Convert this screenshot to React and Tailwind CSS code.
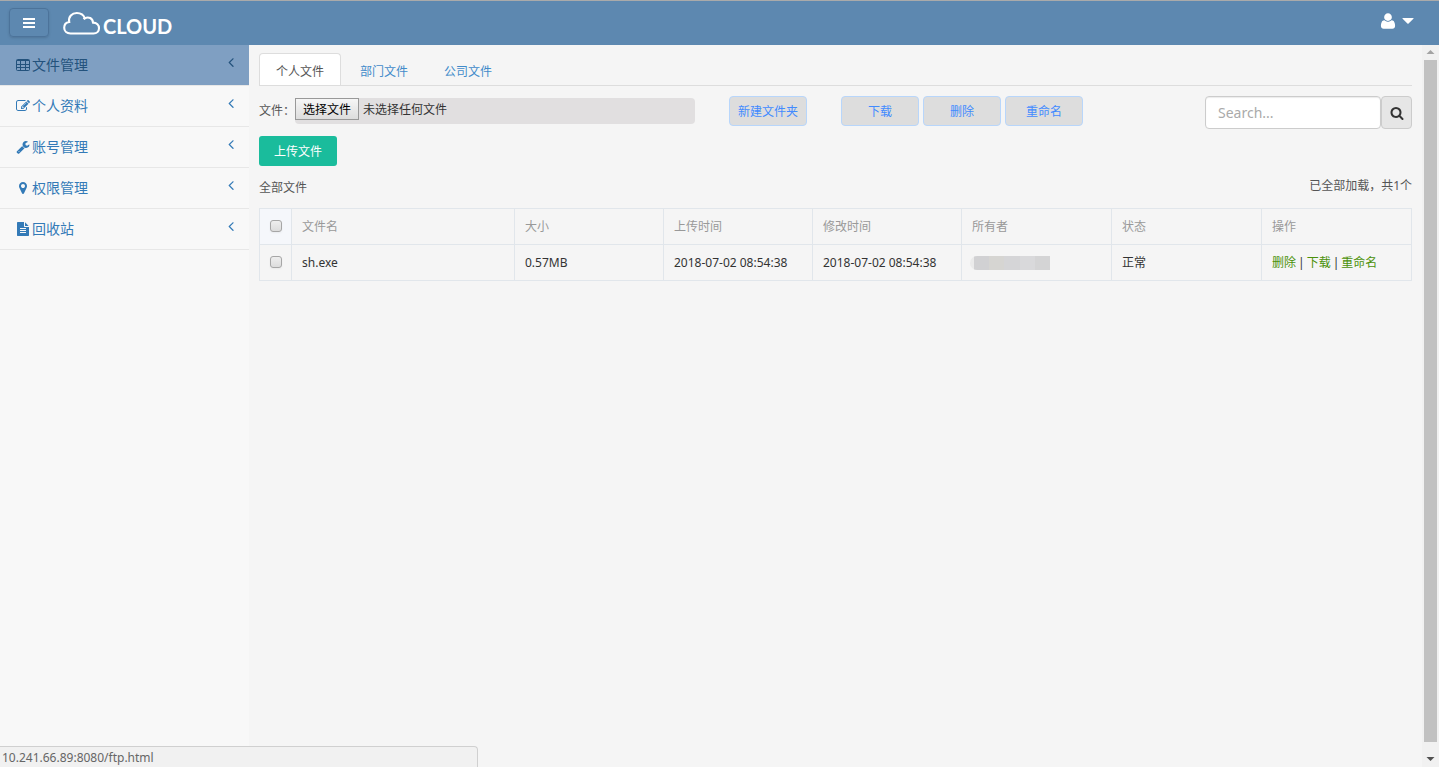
import React, { useState } from 'react';

const ICONS = {
  edit: 'M888 1184l116-116-152-152-116 116v56h96v96h56zm440-720q-16-16-33 1l-350 350q-17 17-1 33t33-1l350-350q17-17 1-33zm80 594v190q0 119-84.5 203.5t-203.5 84.5h-832q-119 0-203.5-84.5t-84.5-203.5v-832q0-119 84.5-203.5t203.5-84.5h832q63 0 117 25 15 7 18 23 3 17-9 29l-49 49q-14 14-32 8-23-6-45-6h-832q-66 0-113 47t-47 113v832q0 66 47 113t113 47h832q66 0 113-47t47-113v-126q0-13 9-22l64-64q15-15 35-7t20 29zm-96-738l288 288-672 672h-288v-288zm444 132l-92 92-288-288 92-92q28-28 68-28t68 28l152 152q28 28 28 68t-28 68z',
  wrench: 'M448 1472q0-26-19-45t-45-19-45 19-19 45 19 45 45 19 45-19 19-45zm644-420l-682 682q-37 37-90 37-52 0-91-37l-106-108q-38-36-38-90 0-53 38-91l681-681q39 98 114.500 173.500t173.500 114.500zm634-435q0 39-23 106-47 134-164.500 217.500t-258.500 83.500q-185 0-316.500-131.500t-131.500-316.500 131.500-316.500 316.500-131.500q58 0 121.500 16.500t107.500 46.500q16 11 16 28t-16 28l-293 169v224l193 107q5-3 79-48.500t135.500-81 70.500-35.500q15 0 23.500 10t8.500 25z',
  marker: 'M1152 640q0-106-75-181t-181-75-181 75-75 181 75 181 181 75 181-75 75-181zm256 0q0 109-33 179l-364 774q-16 33-47.500 52t-67.500 19-67.500-19-46.500-52l-365-774q-33-70-33-179 0-212 150-362t362-150 362 150 150 362z',
  file: 'M1596 476q14 14 28 36h-472v-472q22 14 36 28zm-476 164h544v1056q0 40-28 68t-68 28h-1344q-40 0-68-28t-28-68v-1600q0-40 28-68t68-28h800v544q0 40 28 68t68 28zm160 736v-64q0-14-9-23t-23-9h-704q-14 0-23 9t-9 23v64q0 14 9 23t23 9h704q14 0 23-9t9-23zm0-256v-64q0-14-9-23t-23-9h-704q-14 0-23 9t-9 23v64q0 14 9 23t23 9h704q14 0 23-9t9-23zm0-256v-64q0-14-9-23t-23-9h-704q-14 0-23 9t-9 23v64q0 14 9 23t23 9h704q14 0 23-9t9-23z',
  angle: 'M1203 544q0 13-10 23l-393 393 393 393q10 10 10 23t-10 23l-50 50q-10 10-23 10t-23-10l-466-466q-10-10-10-23t10-23l466-466q10-10 23-10t23 10l50 50q10 10 10 23z',
  search: 'M1216 832q0-185-131.500-316.500t-316.500-131.500-316.500 131.500-131.500 316.500 131.500 316.500 316.500 131.500 316.500-131.500 131.500-316.500zm512 832q0 52-38 90t-90 38q-54 0-90-38l-343-342q-179 124-399 124-143 0-273.500-55.500t-225-150-150-225-55.500-273.500 55.500-273.500 150-225 225-150 273.500-55.500 273.500 55.500 225 150 150 225 55.500 273.500q0 220-124 399l343 343q37 37 37 90z',
  user: 'M1600 1405q0 120-73 189.500t-194 69.500h-874q-121 0-194-69.500t-73-189.500q0-53 3.500-103.500t14-109 26.500-108.500 43-97.500 62-81 85.500-53.500 111.500-20q9 0 42 21.500t74.500 48 108 48 133.500 21.500 133.500-21.500 108-48 74.500-48 42-21.500q61 0 111.500 20t85.500 53.500 62 81 43 97.500 26.500 108.500 14 109 3.500 103.500zm-320-893q0 159-112.500 271.500t-271.500 112.500-271.500-112.500-112.500-271.500 112.500-271.500 271.500-112.500 271.500 112.500 112.500 271.500z',
};

const Icon = ({ name, className }) => (
  <svg viewBox="0 0 1792 1792" fill="currentColor" className={className} aria-hidden="true">
    <path d={ICONS[name]} />
  </svg>
);

// thin grid, drawn on whole pixels so the lines stay crisp
const TableIcon = ({ className }) => (
  <svg viewBox="0 0 14 14" fill="none" stroke="currentColor" className={className} aria-hidden="true">
    <rect x="0.5" y="1.5" width="13" height="11" rx="1" />
    <path d="M1 2.500h12M1 6.500h12M1 9.500h12M4.500 2v10M9.500 2v10" />
  </svg>
);

const menu = [
  { icon: 'table', label: '文件管理' },
  { icon: 'edit', label: '个人资料' },
  { icon: 'wrench', label: '账号管理' },
  { icon: 'marker', label: '权限管理' },
  { icon: 'file', label: '回收站' },
];

const tabs = ['个人文件', '部门文件', '公司文件'];

const columns = [
  { name: '文件名', width: 'w-[223px]' },
  { name: '大小', width: 'w-[149px]' },
  { name: '上传时间', width: 'w-[149px]' },
  { name: '修改时间', width: 'w-[149px]' },
  { name: '所有者', width: '' },
  { name: '状态', width: '' },
  { name: '操作', width: '' },
];

const files = [
  { name: 'sh.exe', size: '0.57MB', uploaded: '2018-07-02 08:54:38', modified: '2018-07-02 08:54:38', status: '正常' },
];

const Header = () => (
  <header className="flex h-[45px] items-start justify-between border-t border-[#aaaaaa] bg-[#5d88b0] pl-[9px] pr-[25px] text-white">
    <div className="flex">
      <button aria-label="菜单" className="mt-[7px] flex h-[29px] w-10 items-center justify-center rounded border border-[#4c739a] shadow-sm">
        <svg viewBox="0 0 12 10" className="h-[10px] w-3" fill="currentColor">
          <path d="M0 0h12v2H0zM0 4h12v2H0zM0 8h12v2H0z" />
        </svg>
      </button>
      <a href="#" className="ml-[14px] mt-[10px] flex h-7">
        <svg viewBox="0 0 38 24" className="h-6 w-[38px]" fill="none" stroke="currentColor" strokeWidth="2.1">
          <path d="M7.500 22.500C3.500 22.500 1.200 19.900 1.200 16.800C1.200 13.700 3.300 11.400 6.200 11C5.200 5.500 9 2 13.800 2C17.800 2 20.800 4.200 21.800 7.300C25.500 5.200 29.800 7.300 30 11.600C33.800 11.700 36 14.200 36 17.200C36 20.300 33.800 22.500 30.500 22.500Z" />
          <path d="M22 7.200C21.500 7.400 21 7.800 20.700 8.300" />
        </svg>
        <span className="ml-0.5 pt-[3px] font-[Lato] text-xl leading-6 font-bold">CLOUD</span>
      </a>
    </div>
    <button aria-label="用户" className="mt-[11px] flex items-center gap-[5px]">
      <Icon name="user" className="h-[18px] w-[18px]" />
      <svg viewBox="0 0 12 6" className="h-[6px] w-3" fill="currentColor">
        <path d="M1 0h10q1 0 .4.800L6.600 5.600q-.6.500-1.200 0L.6.800Q0 0 1 0z" />
      </svg>
    </button>
  </header>
);

const Sidebar = () => (
  <nav className="w-[249px] shrink-0 bg-[#f8f8f8]">
    {menu.map((item, index) => (
      <a
        key={item.label}
        href="#"
        className={`flex h-[41px] items-center border-b border-[#e7e7e7] pl-4 pr-[10px] text-sm leading-5 ${
          index === 0 ? 'bg-[#7f9fc2] text-[#23527c]' : 'text-[#337ab7]'
        }`}
      >
        {item.icon === 'table' ? (
          <TableIcon className="mr-0.5 h-[14px] w-[14px]" />
        ) : (
          <Icon name={item.icon} className="mr-0.5 h-[14px] w-[14px]" />
        )}
        <span>{item.label}</span>
        <Icon name="angle" className="mb-[6px] ml-auto h-4 w-4" />
      </a>
    ))}
  </nav>
);

const ToolButton = ({ children }) => (
  <button className="h-[30px] w-[78px] rounded border border-[#b8d6fb] bg-[#dddddd] pt-0.5 text-[#428bff]">{children}</button>
);

const Toolbar = () => (
  <div className="mt-[10px] flex items-start">
    <div className="flex items-start pt-0.5">
      <label htmlFor="upload" className="w-9 shrink-0 pt-[3px] leading-5 whitespace-nowrap">文件：</label>
      <label className="flex h-[26px] w-[400px] items-start rounded bg-[#e1dfe0] text-[#333333]">
        <input id="upload" type="file" className="sr-only" />
        <span className="h-[22px] w-16 border border-[#999999] bg-linear-to-b from-[#f6f6f6] to-[#dddddd] text-center leading-[22px] text-black">选择文件</span>
        <span className="ml-1 leading-6">未选择任何文件</span>
      </label>
    </div>
    <div className="ml-[34px] flex gap-[34px]">
      <ToolButton>新建文件夹</ToolButton>
      <div className="flex gap-1">
        <ToolButton>下载</ToolButton>
        <ToolButton>删除</ToolButton>
        <ToolButton>重命名</ToolButton>
      </div>
    </div>
    <form className="ml-auto flex" onSubmit={(e) => e.preventDefault()}>
      <input
        type="text"
        aria-label="Search"
        placeholder="Search..."
        className="h-[33px] w-44 rounded border border-[#cccccc] bg-white px-3 text-sm shadow-[inset_0_1px_1px_rgba(0,0,0,0.08)] placeholder:text-[#aaaaaa]"
      />
      <button aria-label="搜索" className="flex h-[33px] w-[31px] items-center justify-center rounded border border-[#cccccc] bg-[#e6e6e6] text-[#333333]">
        <Icon name="search" className="h-[14px] w-[14px]" />
      </button>
    </form>
  </div>
);

const Checkbox = ({ label }) => (
  <input
    type="checkbox"
    aria-label={label}
    className="mb-0.5 block h-3 w-3 appearance-none rounded-[3px] border border-[#a6a6a6] bg-linear-to-b from-[#eeeeee] to-[#dcdcdc] shadow-xs checked:bg-[#428bff]"
  />
);

// owner name is masked out
const MaskedOwner = () => (
  <div className="-ml-0.5 flex h-[14px] w-20 overflow-hidden rounded-l-full bg-[#ebebeb] pl-1">
    <span className="flex-1 bg-[#d1d1d3]" />
    <span className="flex-1 bg-[#d6d5d2]" />
    <span className="flex-1 bg-[#d5d5d7]" />
    <span className="flex-1 bg-[#d9d9db]" />
    <span className="flex-1 bg-[#d4d4d5]" />
  </div>
);

const cell = 'h-9 border border-[#e1e6eb] px-[10px] text-left font-normal whitespace-nowrap';

const FileTable = () => (
  <table className="w-full table-fixed border-collapse leading-5">
    <thead className="text-[#999999]">
      <tr>
        <th className="h-9 w-8 border border-[#e1e6eb] bg-[#f5f7fb] px-[10px]">
          <Checkbox label="全选" />
        </th>
        {columns.map((column) => (
          <th key={column.name} className={`${cell} ${column.width}`}>{column.name}</th>
        ))}
      </tr>
    </thead>
    <tbody className="text-[#333333]">
      {files.map((file) => (
        <tr key={file.name}>
          <td className={cell}>
            <Checkbox label={file.name} />
          </td>
          <td className={cell}>{file.name}</td>
          <td className={cell}>{file.size}</td>
          <td className={cell}>{file.uploaded}</td>
          <td className={cell}>{file.modified}</td>
          <td className={cell}>
            <MaskedOwner />
          </td>
          <td className={cell}>{file.status}</td>
          <td className={cell}>
            <div className="flex gap-0.5">
              <a href="#" className="text-[#4b9109]">删除</a>
              <span>|</span>
              <a href="#" className="text-[#4b9109]">下载</a>
              <span>|</span>
              <a href="#" className="text-[#4b9109]">重命名</a>
            </div>
          </td>
        </tr>
      ))}
    </tbody>
  </table>
);

const Scrollbar = () => (
  <div className="flex w-[17px] shrink-0 flex-col items-center bg-[#f1f1f1]" aria-hidden="true">
    <svg viewBox="0 0 17 15" className="h-[15px] w-[17px]" fill="#a3a3a3">
      <path d="M8.500 5L12.500 9h-8z" />
    </svg>
    <div className="w-[13px] flex-1 bg-[#c1c1c1]" />
    <svg viewBox="0 0 17 25" className="h-[25px] w-[17px]" fill="#505050">
      <path d="M4.500 15h8l-4 4z" />
    </svg>
  </div>
);

const App = () => {
  const [active, setActive] = useState(tabs[0]);

  return (
    <div className="flex min-h-screen flex-col bg-[#f5f5f5] font-['Noto_Sans','Noto_Sans_CJK_SC',sans-serif] text-xs text-[#555555]">
      <Header />
      <div className="flex flex-1">
        <Sidebar />
        <main className="min-w-0 flex-1 px-[10px] pt-2">
          <div role="tablist" className="flex gap-0.5 border-b border-[#dddddd]">
            {tabs.map((tab) => (
              <button
                key={tab}
                role="tab"
                aria-selected={tab === active}
                onClick={() => setActive(tab)}
                className={`h-8 rounded-t border border-b-0 px-4 pt-[5px] ${
                  tab === active ? 'border-[#dddddd] bg-white text-[#555555]' : 'border-transparent text-[#428bca]'
                }`}
              >
                {tab}
              </button>
            ))}
          </div>
          <Toolbar />
          <button className="mt-[7px] h-[30px] w-[78px] rounded-[3px] bg-[#1abc9c] pt-0.5 text-white">上传文件</button>
          <div className="mt-2 mb-[10px] flex h-6 justify-between leading-5">
            <span className="pt-1">全部文件</span>
            <span className="pt-0.5">已全部加载，共1个</span>
          </div>
          <FileTable />
        </main>
        <Scrollbar />
      </div>
      <div className="fixed bottom-0 left-0 h-[21px] w-[478px] rounded-tr border-t border-r border-[#d0d0d0] bg-[#f1f1f1] pl-0.5 leading-[22px] text-[#666666]">
        10.241.66.89:8080/ftp.html
      </div>
    </div>
  );
};

export default App;
